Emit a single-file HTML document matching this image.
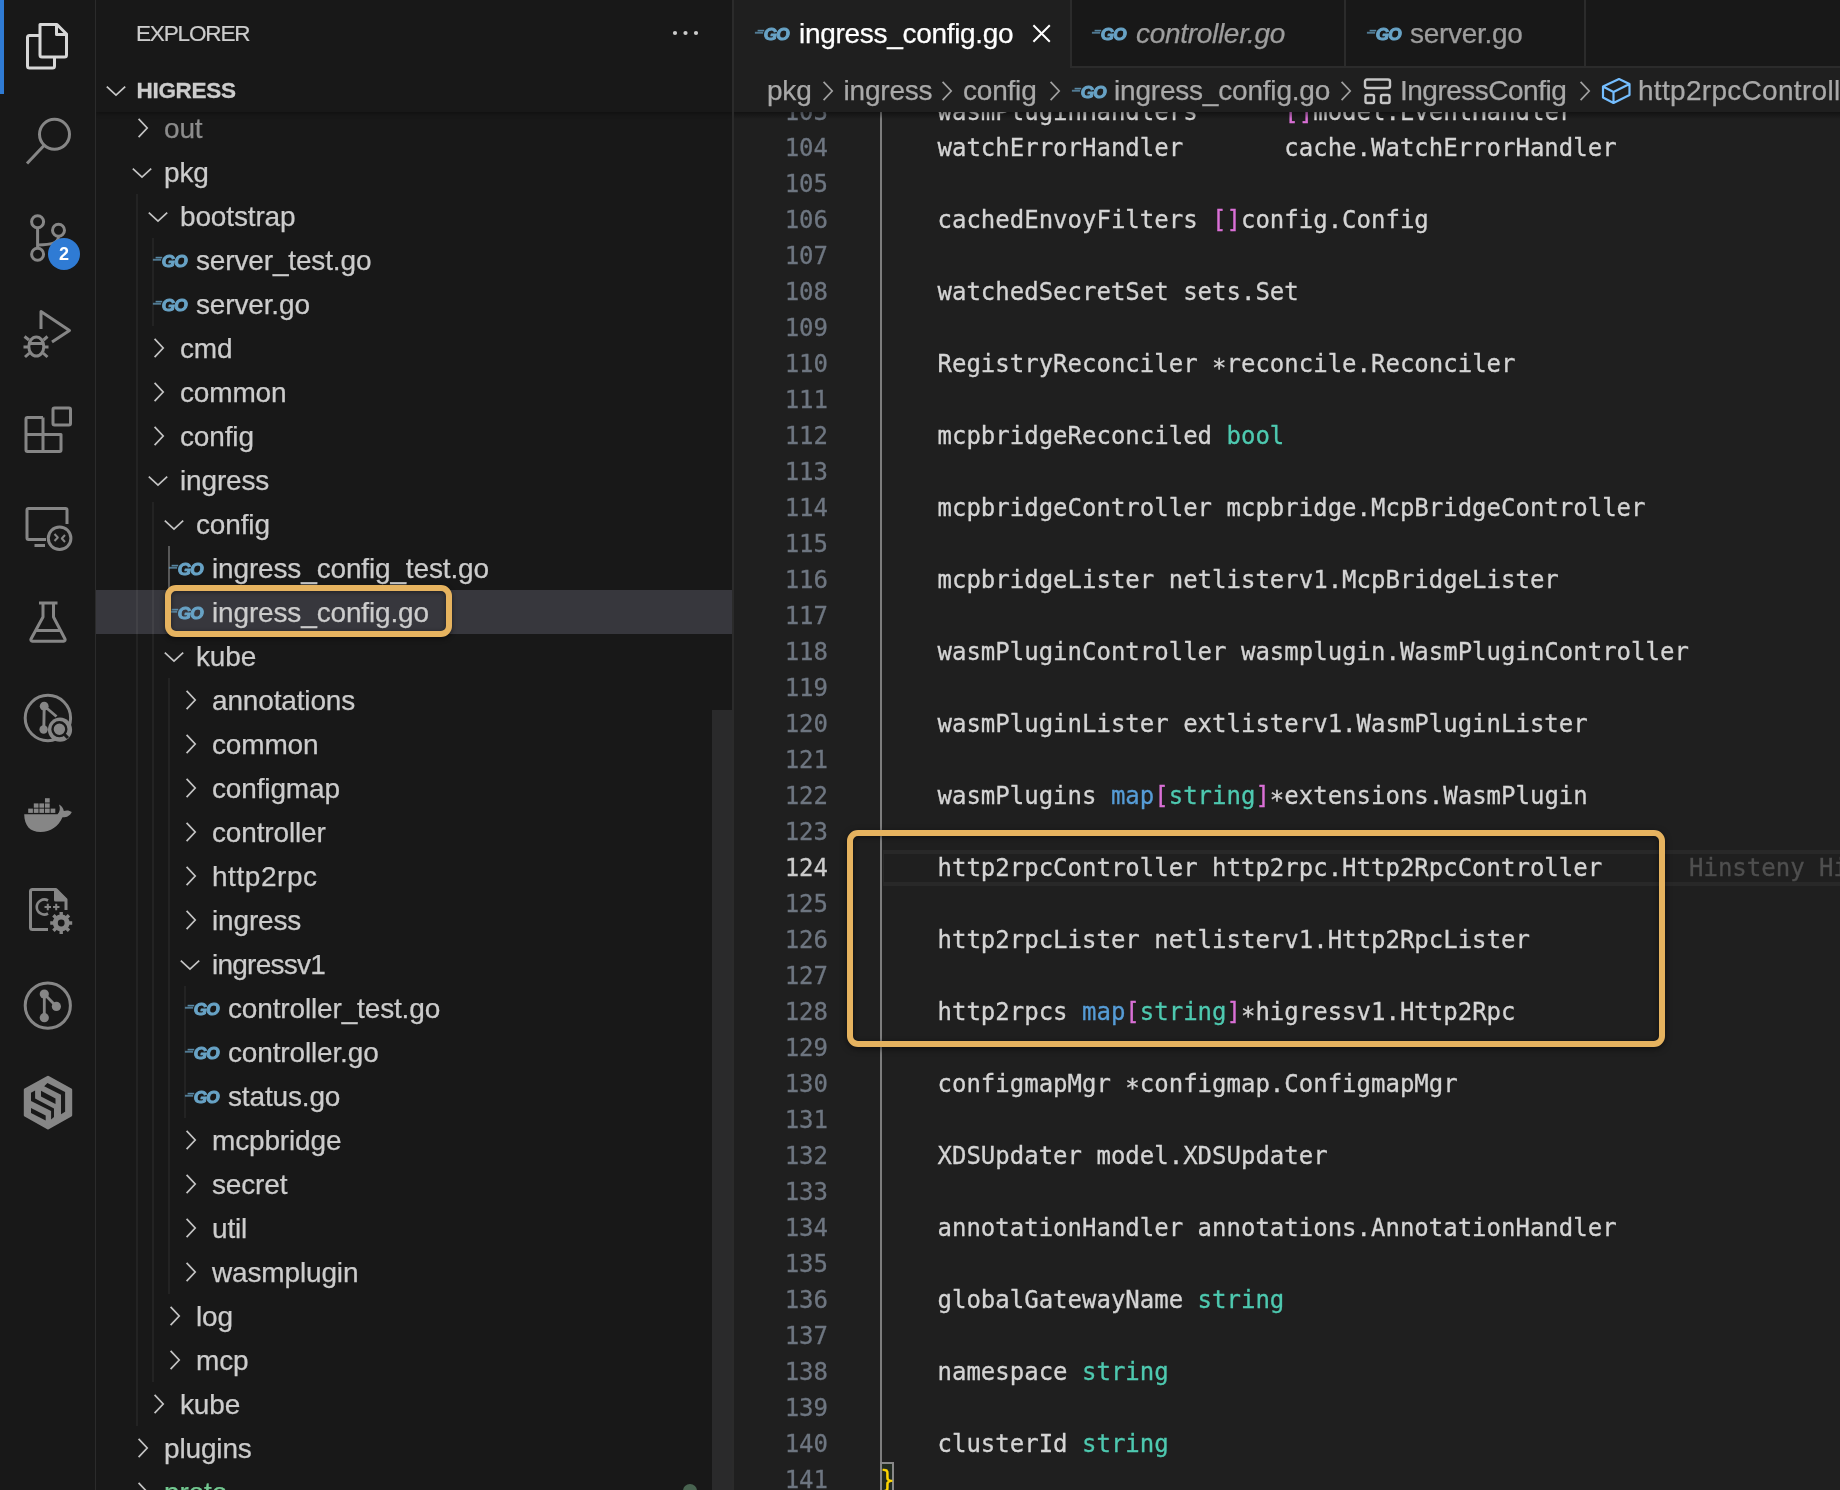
<!DOCTYPE html>
<html lang="en"><head><meta charset="utf-8"><title>ingress_config.go - higress</title>
<style>
html,body{margin:0;padding:0;background:#181818;}
body{width:1840px;height:1490px;position:relative;overflow:hidden;font-family:"Liberation Sans",sans-serif;color:#ccc;}
.abs{position:absolute;}
svg{display:block;overflow:visible}
.go{position:absolute;}
#act,#side,#ed{will-change:transform}
#act{position:absolute;left:0;top:0;width:95px;height:1490px;background:#181818;border-right:1px solid #2b2b2b;}
#side{position:absolute;left:96px;top:0;width:637px;height:1490px;background:#181818;overflow:hidden;}
#ed{position:absolute;left:734px;top:0;width:1106px;height:1490px;background:#1f1f1f;overflow:hidden;}
#edborder{position:absolute;left:732px;top:0;width:2px;height:1490px;background:#2b2b2b;}
.row{position:absolute;left:0;width:637px;height:44px;}
.lbl{position:absolute;top:0;-webkit-text-stroke:.25px;height:44px;line-height:46px;font-size:28px;letter-spacing:-.15px;color:#ccc;white-space:pre;}
.guide{position:absolute;width:2px;background:#2c2c2c;}
.ln{position:absolute;left:0;-webkit-text-stroke:.3px;width:94px;text-align:right;font-family:"DejaVu Sans Mono","Liberation Mono",monospace;font-size:24px;line-height:36px;height:36px;color:#6e7681;white-space:pre;}
.cl{position:absolute;left:147px;-webkit-text-stroke:.3px;font-family:"DejaVu Sans Mono","Liberation Mono",monospace;font-size:24px;line-height:36px;height:36px;color:#d4d4d4;white-space:pre;}
.as{position:relative;top:4px}.t{color:#4ec9b0}.k{color:#569cd6}.b2{color:#da70d6}.b1{color:#ffd700}
.tab{position:absolute;top:0;height:66px;border-right:2px solid #2b2b2b;box-sizing:border-box;}
.tabl{position:absolute;top:12px;-webkit-text-stroke:.25px;font-size:28px;line-height:44px;white-space:pre;letter-spacing:-.3px;}
.bc{position:absolute;top:69px;-webkit-text-stroke:.25px;font-size:28px;line-height:44px;color:#a9a9a9;white-space:pre;letter-spacing:-.2px;}
</style></head><body>

<div id="act">
<div class="abs" style="left:0;top:0;width:4px;height:94px;background:#2f7bd4"></div>
<svg class="abs" style="left:0;top:0" width="96" height="96" viewBox="0 0 96 96" fill="none" stroke="#d7d7d7" stroke-width="3" stroke-linejoin="round">
<path d="M40 24.5 H57 L66.5 34 V55 a2 2 0 0 1 -2 2 H42 a2 2 0 0 1 -2 -2 Z"/>
<path d="M56.5 25 V34.5 H66"/>
<path d="M39.5 35.5 H29.5 a2 2 0 0 0 -2 2 V66 a2 2 0 0 0 2 2 H52.5 a2 2 0 0 0 2 -2 V57.5"/>
</svg>
<svg class="abs" style="left:0;top:96px" width="96" height="96" viewBox="0 96 96 96" fill="none" stroke="#868686" stroke-width="3">
<circle cx="54.5" cy="134.3" r="15"/><path d="M44 145.5 L27 163.5"/></svg>
<svg class="abs" style="left:0;top:192px" width="96" height="96" viewBox="0 192 96 96" fill="none" stroke="#868686" stroke-width="3">
<circle cx="37.6" cy="221.8" r="6"/><circle cx="58.5" cy="230.3" r="6"/><circle cx="37.6" cy="254.2" r="6"/>
<path d="M37.6 228 V248"/><path d="M58.5 236.5 C58.5 244 50 244.5 38 245"/></svg>
<div class="abs" style="left:48px;top:238px;width:32px;height:32px;border-radius:16px;background:#2f7bd4;color:#fff;font-weight:bold;font-size:18px;line-height:32px;text-align:center">2</div>
<svg class="abs" style="left:0;top:288px" width="96" height="96" viewBox="0 288 96 96" fill="none" stroke="#868686" stroke-width="3" stroke-linejoin="round">
<path d="M41 329 V311.5 L69.5 330.5 L52 342"/>
<ellipse cx="36.3" cy="346.5" rx="7.5" ry="9.5"/>
<path d="M29 340 L24.5 336.5 M43.5 340 L47.5 336.5 M28.5 347 H23.5 M44 347 H48.5 M29.5 353 L25 357 M43 353 L47.5 357 M30 343.5 H42.5"/>
</svg>
<svg class="abs" style="left:0;top:384px" width="96" height="96" viewBox="0 384 96 96" fill="none" stroke="#868686" stroke-width="3" stroke-linejoin="round">
<path d="M43 417.5 H27.5 a1.5 1.5 0 0 0 -1.5 1.5 V450 a1.5 1.5 0 0 0 1.5 1.5 H59.5 a1.5 1.5 0 0 0 1.5 -1.5 V434.5 H26 M43 417.5 V451.5"/>
<rect x="53" y="408" width="17.5" height="17" rx="1.5"/>
</svg>
<svg class="abs" style="left:0;top:480px" width="96" height="96" viewBox="0 480 96 96" fill="none" stroke="#868686" stroke-width="3" stroke-linejoin="round">
<path d="M46 539.5 H28.5 a1.5 1.5 0 0 1 -1.5 -1.5 V510 a1.5 1.5 0 0 1 1.5 -1.5 H65.5 a1.5 1.5 0 0 1 1.5 1.5 V524"/>
<path d="M34.5 545.5 H45"/>
<circle cx="59.6" cy="538.2" r="11.3"/>
<path d="M54.5 534 L57.8 537.5 L54.5 541 M65 535 L61.8 538.5 L65 542" stroke-width="2"/>
</svg>
<svg class="abs" style="left:0;top:576px" width="96" height="96" viewBox="0 576 96 96" fill="none" stroke="#868686" stroke-width="3" stroke-linejoin="round">
<path d="M39 603 H57.5"/>
<path d="M43 603.5 V617 L31 639 a1.5 1.5 0 0 0 1.3 2.2 H63.7 a1.5 1.5 0 0 0 1.3 -2.2 L53.5 617 V603.5"/>
<path d="M35.5 630.5 H61"/>
</svg>
<svg class="abs" style="left:0;top:672px" width="96" height="96" viewBox="0 672 96 96" fill="none" stroke="#868686" stroke-width="3">
<circle cx="47.9" cy="718" r="22.7"/>
<circle cx="44.2" cy="706.2" r="4.4" fill="#868686" stroke="none"/><circle cx="43.6" cy="729.5" r="4.2" fill="#868686" stroke="none"/>
<path d="M44.2 706 L43.8 729.5 M44.2 706 L56.5 716.5" stroke-width="2.9"/>
<circle cx="60" cy="729.7" r="12.1" fill="#868686" stroke="none"/>
<circle cx="59.4" cy="729.2" r="6.9" stroke="#181818" stroke-width="2.4"/>
<path d="M64.4 734.4 L68 738" stroke="#181818" stroke-width="3"/>
</svg>
<svg class="abs" style="left:0;top:768px" width="96" height="96" viewBox="0 768 96 96" fill="#868686" stroke="none">
<rect x="28.2" y="808.6" width="4.7" height="4.3"/><rect x="33.8" y="808.6" width="4.7" height="4.3"/><rect x="39.4" y="808.6" width="4.7" height="4.3"/><rect x="45" y="808.6" width="4.7" height="4.3"/><rect x="50.6" y="808.6" width="4.7" height="4.3"/><rect x="33.8" y="803.4" width="4.7" height="4.3"/><rect x="39.4" y="803.4" width="4.7" height="4.3"/><rect x="45" y="803.4" width="4.7" height="4.3"/><rect x="45" y="798.2" width="4.7" height="4.3"/>
<path d="M24.2 814.2 H57.5 C60 812 60.5 808 59 804.5 C62 806 63.5 808.5 63.8 811 C66.5 810 69.5 810.3 71.8 812 C70 816 66.5 817.5 62.5 817.3 C58.5 826.5 50.5 832 40.5 832 C30 832 24.3 825.5 24.2 814.2 Z"/>
</svg>
<svg class="abs" style="left:0;top:864px" width="96" height="96" viewBox="0 864 96 96" fill="none" stroke="#868686" stroke-width="3" stroke-linejoin="round">
<path d="M48 929.5 H32.5 a2 2 0 0 1 -2 -2 V891.5 a2 2 0 0 1 2 -2 H56 L66 899.5 V910"/>
<path d="M55.5 890 V900 H65.5 Z" fill="#868686"/>
<path d="M48 900.5 A7.5 7.5 0 1 0 48 913.5" stroke-width="2.6"/>
<path d="M44.5 907 H51 M47.8 903.8 V910.2 M53 907 H59.5 M56.2 903.8 V910.2" stroke-width="2"/>
<circle cx="61.2" cy="923" r="6.3" stroke-width="4.2"/>
<path d="M61.2 912 V934 M50.2 923 H72.2 M53.4 915.2 L69 930.8 M69 915.2 L53.4 930.8" stroke-width="3.4"/>
<circle cx="61.2" cy="923" r="3.4" fill="#181818" stroke="none"/>
</svg>
<svg class="abs" style="left:0;top:960px" width="96" height="96" viewBox="0 960 96 96" fill="none" stroke="#868686" stroke-width="3">
<circle cx="47.8" cy="1005.6" r="22.6"/>
<circle cx="44.3" cy="994" r="4.6" fill="#868686" stroke="none"/><circle cx="44.3" cy="1017.7" r="4.6" fill="#868686" stroke="none"/><circle cx="56.4" cy="1006.4" r="4.6" fill="#868686" stroke="none"/>
<path d="M44.3 994 V1017.7 M44.3 994 L56.4 1006.4" stroke-width="2.8"/>
</svg>
<svg class="abs" style="left:0;top:1056px" width="96" height="96" viewBox="0 1056 96 96">
<path d="M48 1077.3 L70.7 1089.8 V1115.2 L48 1127.9 L25.3 1115.2 V1089.8 Z" fill="#868686" stroke="#868686" stroke-width="3" stroke-linejoin="round"/>
<g fill="#181818">
<path d="M47.4 1083.1 L65.1 1092 V1111.8 L61 1114.3 V1094.8 L44.2 1086.3 Z"/>
<path d="M41 1090.7 L55.5 1098.4 V1104.1 L41 1096.5 Z"/>
<path d="M31 1092.7 L35.1 1090.5 V1098.4 L54 1108.6 V1117.1 L51.1 1119.4 V1111.1 L31 1100.9 Z"/>
<path d="M31 1108 L45.7 1115.4 V1120.5 L31 1113.1 Z"/>
</g>
</svg>
</div>
<div id="side">
<div class="abs" style="left:0;top:590px;width:637px;height:44px;background:#37373d"></div>
<div class="guide" style="left:40px;top:194px;height:1232px;background:rgba(255,255,255,.05)"></div>
<div class="guide" style="left:56px;top:238px;height:88px;background:rgba(255,255,255,.05)"></div>
<div class="guide" style="left:56px;top:502px;height:880px;background:rgba(255,255,255,.05)"></div>
<div class="guide" style="left:72px;top:546px;height:88px;background:#585858"></div>
<div class="guide" style="left:72px;top:678px;height:616px;background:rgba(255,255,255,.05)"></div>
<div class="guide" style="left:88px;top:986px;height:132px;background:rgba(255,255,255,.05)"></div>
<div class="row" style="top:106px">
<svg class="abs" style="left:38.7px;top:10px" width="16" height="24" viewBox="0 0 16 24"><path d="M3.6 2.8 L12.2 12 L3.6 21.2" fill="none" stroke="#c4c4c4" stroke-width="1.7"/></svg>
<span class="lbl" style="left:68px;color:#8c8c8c">out</span>
</div>
<div class="row" style="top:150px">
<svg class="abs" style="left:34px;top:14.5px" width="24" height="16" viewBox="0 0 24 16"><path d="M2.8 3.6 L12 12.2 L21.2 3.6" fill="none" stroke="#c4c4c4" stroke-width="1.7"/></svg>
<span class="lbl" style="left:68px;color:#ccc">pkg</span>
</div>
<div class="row" style="top:194px">
<svg class="abs" style="left:50px;top:14.5px" width="24" height="16" viewBox="0 0 24 16"><path d="M2.8 3.6 L12 12.2 L21.2 3.6" fill="none" stroke="#c4c4c4" stroke-width="1.7"/></svg>
<span class="lbl" style="left:84px;color:#ccc">bootstrap</span>
</div>
<div class="row" style="top:238px">
<svg class="go" style="left:56.2px;top:13px;opacity:1.0" width="38" height="18" viewBox="0 0 38 18"><rect x="3.6" y="5.8" width="6.6" height="1.6" fill="#68a3c6" opacity=".8"/><rect x="0.9" y="7.8" width="8.2" height="1.9" fill="#68a3c6" opacity=".7"/><text x="9.7" y="15.6" font-family="Liberation Sans, sans-serif" font-weight="bold" font-style="italic" font-size="17.2" letter-spacing="-0.9" fill="#68a3c6" stroke="#68a3c6" stroke-width="1.05" stroke-linejoin="round">GO</text></svg>
<span class="lbl" style="left:100px;color:#ccc">server_test.go</span>
</div>
<div class="row" style="top:282px">
<svg class="go" style="left:56.2px;top:13px;opacity:1.0" width="38" height="18" viewBox="0 0 38 18"><rect x="3.6" y="5.8" width="6.6" height="1.6" fill="#68a3c6" opacity=".8"/><rect x="0.9" y="7.8" width="8.2" height="1.9" fill="#68a3c6" opacity=".7"/><text x="9.7" y="15.6" font-family="Liberation Sans, sans-serif" font-weight="bold" font-style="italic" font-size="17.2" letter-spacing="-0.9" fill="#68a3c6" stroke="#68a3c6" stroke-width="1.05" stroke-linejoin="round">GO</text></svg>
<span class="lbl" style="left:100px;color:#ccc">server.go</span>
</div>
<div class="row" style="top:326px">
<svg class="abs" style="left:54.7px;top:10px" width="16" height="24" viewBox="0 0 16 24"><path d="M3.6 2.8 L12.2 12 L3.6 21.2" fill="none" stroke="#c4c4c4" stroke-width="1.7"/></svg>
<span class="lbl" style="left:84px;color:#ccc">cmd</span>
</div>
<div class="row" style="top:370px">
<svg class="abs" style="left:54.7px;top:10px" width="16" height="24" viewBox="0 0 16 24"><path d="M3.6 2.8 L12.2 12 L3.6 21.2" fill="none" stroke="#c4c4c4" stroke-width="1.7"/></svg>
<span class="lbl" style="left:84px;color:#ccc">common</span>
</div>
<div class="row" style="top:414px">
<svg class="abs" style="left:54.7px;top:10px" width="16" height="24" viewBox="0 0 16 24"><path d="M3.6 2.8 L12.2 12 L3.6 21.2" fill="none" stroke="#c4c4c4" stroke-width="1.7"/></svg>
<span class="lbl" style="left:84px;color:#ccc">config</span>
</div>
<div class="row" style="top:458px">
<svg class="abs" style="left:50px;top:14.5px" width="24" height="16" viewBox="0 0 24 16"><path d="M2.8 3.6 L12 12.2 L21.2 3.6" fill="none" stroke="#c4c4c4" stroke-width="1.7"/></svg>
<span class="lbl" style="left:84px;color:#ccc">ingress</span>
</div>
<div class="row" style="top:502px">
<svg class="abs" style="left:66px;top:14.5px" width="24" height="16" viewBox="0 0 24 16"><path d="M2.8 3.6 L12 12.2 L21.2 3.6" fill="none" stroke="#c4c4c4" stroke-width="1.7"/></svg>
<span class="lbl" style="left:100px;color:#ccc">config</span>
</div>
<div class="row" style="top:546px">
<svg class="go" style="left:72.2px;top:13px;opacity:1.0" width="38" height="18" viewBox="0 0 38 18"><rect x="3.6" y="5.8" width="6.6" height="1.6" fill="#68a3c6" opacity=".8"/><rect x="0.9" y="7.8" width="8.2" height="1.9" fill="#68a3c6" opacity=".7"/><text x="9.7" y="15.6" font-family="Liberation Sans, sans-serif" font-weight="bold" font-style="italic" font-size="17.2" letter-spacing="-0.9" fill="#68a3c6" stroke="#68a3c6" stroke-width="1.05" stroke-linejoin="round">GO</text></svg>
<span class="lbl" style="left:116px;color:#ccc">ingress_config_test.go</span>
</div>
<div class="row" style="top:590px">
<svg class="go" style="left:72.2px;top:13px;opacity:1.0" width="38" height="18" viewBox="0 0 38 18"><rect x="3.6" y="5.8" width="6.6" height="1.6" fill="#68a3c6" opacity=".8"/><rect x="0.9" y="7.8" width="8.2" height="1.9" fill="#68a3c6" opacity=".7"/><text x="9.7" y="15.6" font-family="Liberation Sans, sans-serif" font-weight="bold" font-style="italic" font-size="17.2" letter-spacing="-0.9" fill="#68a3c6" stroke="#68a3c6" stroke-width="1.05" stroke-linejoin="round">GO</text></svg>
<span class="lbl" style="left:116px;color:#ccc">ingress_config.go</span>
</div>
<div class="row" style="top:634px">
<svg class="abs" style="left:66px;top:14.5px" width="24" height="16" viewBox="0 0 24 16"><path d="M2.8 3.6 L12 12.2 L21.2 3.6" fill="none" stroke="#c4c4c4" stroke-width="1.7"/></svg>
<span class="lbl" style="left:100px;color:#ccc">kube</span>
</div>
<div class="row" style="top:678px">
<svg class="abs" style="left:86.7px;top:10px" width="16" height="24" viewBox="0 0 16 24"><path d="M3.6 2.8 L12.2 12 L3.6 21.2" fill="none" stroke="#c4c4c4" stroke-width="1.7"/></svg>
<span class="lbl" style="left:116px;color:#ccc">annotations</span>
</div>
<div class="row" style="top:722px">
<svg class="abs" style="left:86.7px;top:10px" width="16" height="24" viewBox="0 0 16 24"><path d="M3.6 2.8 L12.2 12 L3.6 21.2" fill="none" stroke="#c4c4c4" stroke-width="1.7"/></svg>
<span class="lbl" style="left:116px;color:#ccc">common</span>
</div>
<div class="row" style="top:766px">
<svg class="abs" style="left:86.7px;top:10px" width="16" height="24" viewBox="0 0 16 24"><path d="M3.6 2.8 L12.2 12 L3.6 21.2" fill="none" stroke="#c4c4c4" stroke-width="1.7"/></svg>
<span class="lbl" style="left:116px;color:#ccc">configmap</span>
</div>
<div class="row" style="top:810px">
<svg class="abs" style="left:86.7px;top:10px" width="16" height="24" viewBox="0 0 16 24"><path d="M3.6 2.8 L12.2 12 L3.6 21.2" fill="none" stroke="#c4c4c4" stroke-width="1.7"/></svg>
<span class="lbl" style="left:116px;color:#ccc">controller</span>
</div>
<div class="row" style="top:854px">
<svg class="abs" style="left:86.7px;top:10px" width="16" height="24" viewBox="0 0 16 24"><path d="M3.6 2.8 L12.2 12 L3.6 21.2" fill="none" stroke="#c4c4c4" stroke-width="1.7"/></svg>
<span class="lbl" style="left:116px;color:#ccc;letter-spacing:.55px">http2rpc</span>
</div>
<div class="row" style="top:898px">
<svg class="abs" style="left:86.7px;top:10px" width="16" height="24" viewBox="0 0 16 24"><path d="M3.6 2.8 L12.2 12 L3.6 21.2" fill="none" stroke="#c4c4c4" stroke-width="1.7"/></svg>
<span class="lbl" style="left:116px;color:#ccc">ingress</span>
</div>
<div class="row" style="top:942px">
<svg class="abs" style="left:82px;top:14.5px" width="24" height="16" viewBox="0 0 24 16"><path d="M2.8 3.6 L12 12.2 L21.2 3.6" fill="none" stroke="#c4c4c4" stroke-width="1.7"/></svg>
<span class="lbl" style="left:116px;color:#ccc;letter-spacing:-.75px">ingressv1</span>
</div>
<div class="row" style="top:986px">
<svg class="go" style="left:88.2px;top:13px;opacity:1.0" width="38" height="18" viewBox="0 0 38 18"><rect x="3.6" y="5.8" width="6.6" height="1.6" fill="#68a3c6" opacity=".8"/><rect x="0.9" y="7.8" width="8.2" height="1.9" fill="#68a3c6" opacity=".7"/><text x="9.7" y="15.6" font-family="Liberation Sans, sans-serif" font-weight="bold" font-style="italic" font-size="17.2" letter-spacing="-0.9" fill="#68a3c6" stroke="#68a3c6" stroke-width="1.05" stroke-linejoin="round">GO</text></svg>
<span class="lbl" style="left:132px;color:#ccc">controller_test.go</span>
</div>
<div class="row" style="top:1030px">
<svg class="go" style="left:88.2px;top:13px;opacity:1.0" width="38" height="18" viewBox="0 0 38 18"><rect x="3.6" y="5.8" width="6.6" height="1.6" fill="#68a3c6" opacity=".8"/><rect x="0.9" y="7.8" width="8.2" height="1.9" fill="#68a3c6" opacity=".7"/><text x="9.7" y="15.6" font-family="Liberation Sans, sans-serif" font-weight="bold" font-style="italic" font-size="17.2" letter-spacing="-0.9" fill="#68a3c6" stroke="#68a3c6" stroke-width="1.05" stroke-linejoin="round">GO</text></svg>
<span class="lbl" style="left:132px;color:#ccc">controller.go</span>
</div>
<div class="row" style="top:1074px">
<svg class="go" style="left:88.2px;top:13px;opacity:1.0" width="38" height="18" viewBox="0 0 38 18"><rect x="3.6" y="5.8" width="6.6" height="1.6" fill="#68a3c6" opacity=".8"/><rect x="0.9" y="7.8" width="8.2" height="1.9" fill="#68a3c6" opacity=".7"/><text x="9.7" y="15.6" font-family="Liberation Sans, sans-serif" font-weight="bold" font-style="italic" font-size="17.2" letter-spacing="-0.9" fill="#68a3c6" stroke="#68a3c6" stroke-width="1.05" stroke-linejoin="round">GO</text></svg>
<span class="lbl" style="left:132px;color:#ccc">status.go</span>
</div>
<div class="row" style="top:1118px">
<svg class="abs" style="left:86.7px;top:10px" width="16" height="24" viewBox="0 0 16 24"><path d="M3.6 2.8 L12.2 12 L3.6 21.2" fill="none" stroke="#c4c4c4" stroke-width="1.7"/></svg>
<span class="lbl" style="left:116px;color:#ccc">mcpbridge</span>
</div>
<div class="row" style="top:1162px">
<svg class="abs" style="left:86.7px;top:10px" width="16" height="24" viewBox="0 0 16 24"><path d="M3.6 2.8 L12.2 12 L3.6 21.2" fill="none" stroke="#c4c4c4" stroke-width="1.7"/></svg>
<span class="lbl" style="left:116px;color:#ccc">secret</span>
</div>
<div class="row" style="top:1206px">
<svg class="abs" style="left:86.7px;top:10px" width="16" height="24" viewBox="0 0 16 24"><path d="M3.6 2.8 L12.2 12 L3.6 21.2" fill="none" stroke="#c4c4c4" stroke-width="1.7"/></svg>
<span class="lbl" style="left:116px;color:#ccc">util</span>
</div>
<div class="row" style="top:1250px">
<svg class="abs" style="left:86.7px;top:10px" width="16" height="24" viewBox="0 0 16 24"><path d="M3.6 2.8 L12.2 12 L3.6 21.2" fill="none" stroke="#c4c4c4" stroke-width="1.7"/></svg>
<span class="lbl" style="left:116px;color:#ccc">wasmplugin</span>
</div>
<div class="row" style="top:1294px">
<svg class="abs" style="left:70.7px;top:10px" width="16" height="24" viewBox="0 0 16 24"><path d="M3.6 2.8 L12.2 12 L3.6 21.2" fill="none" stroke="#c4c4c4" stroke-width="1.7"/></svg>
<span class="lbl" style="left:100px;color:#ccc">log</span>
</div>
<div class="row" style="top:1338px">
<svg class="abs" style="left:70.7px;top:10px" width="16" height="24" viewBox="0 0 16 24"><path d="M3.6 2.8 L12.2 12 L3.6 21.2" fill="none" stroke="#c4c4c4" stroke-width="1.7"/></svg>
<span class="lbl" style="left:100px;color:#ccc">mcp</span>
</div>
<div class="row" style="top:1382px">
<svg class="abs" style="left:54.7px;top:10px" width="16" height="24" viewBox="0 0 16 24"><path d="M3.6 2.8 L12.2 12 L3.6 21.2" fill="none" stroke="#c4c4c4" stroke-width="1.7"/></svg>
<span class="lbl" style="left:84px;color:#ccc">kube</span>
</div>
<div class="row" style="top:1426px">
<svg class="abs" style="left:38.7px;top:10px" width="16" height="24" viewBox="0 0 16 24"><path d="M3.6 2.8 L12.2 12 L3.6 21.2" fill="none" stroke="#c4c4c4" stroke-width="1.7"/></svg>
<span class="lbl" style="left:68px;color:#ccc">plugins</span>
</div>
<div class="row" style="top:1470px">
<svg class="abs" style="left:38.7px;top:10px" width="16" height="24" viewBox="0 0 16 24"><path d="M3.6 2.8 L12.2 12 L3.6 21.2" fill="none" stroke="#c4c4c4" stroke-width="1.7"/></svg>
<span class="lbl" style="left:68px;color:#73c991">proto</span>
</div>
<div class="abs" style="left:586.6px;top:1484.4px;width:14.6px;height:14.6px;border-radius:8px;background:#486350"></div>
<div class="abs" style="left:0;top:0;width:637px;height:112px;background:#181818;box-shadow:0 2px 4px rgba(0,0,0,.3)"></div>
<div class="abs" style="left:40px;top:16.5px;font-size:22.5px;line-height:34px;color:#ccc;letter-spacing:-1.15px;-webkit-text-stroke:.2px;white-space:pre">EXPLORER</div>
<svg class="abs" style="left:574px;top:29px" width="32" height="8" viewBox="0 0 32 8" fill="#ccc"><circle cx="5" cy="4" r="2.1"/><circle cx="15.5" cy="4" r="2.1"/><circle cx="26" cy="4" r="2.1"/></svg>
<svg class="abs" style="left:8px;top:83px" width="24" height="16" viewBox="0 0 24 16"><path d="M2.8 3.6 L12 12.2 L21.2 3.6" fill="none" stroke="#c8c8c8" stroke-width="1.7"/></svg>
<div class="abs" style="left:40.5px;top:73px;font-size:22.5px;line-height:36px;font-weight:bold;color:#ccc;letter-spacing:-.3px;-webkit-text-stroke:.3px;white-space:pre">HIGRESS</div>
<div class="abs" style="left:616px;top:710px;width:20px;height:780px;background:#2a2a2b"></div>
<div class="abs" style="left:69px;top:585px;width:287px;height:52px;box-sizing:border-box;border:6px solid #e6b35f;border-radius:11px;box-shadow:0 2px 5px rgba(0,0,0,.45), inset 0 1px 4px rgba(0,0,0,.45)"></div>
</div>
<div id="edborder"></div>
<div id="ed">
<div class="abs" style="left:149px;top:850px;width:960px;height:36px;box-sizing:border-box;border:4px solid #282828;border-right:0;border-left-width:1.5px"></div>
<div class="abs" style="left:146px;top:94px;width:2px;height:1368px;background:#7d7d7d"></div>
<div class="ln" style="top:94px;color:#6e7681">103</div>
<div class="cl" style="top:94px;left:203.5px">wasmPluginHandlers      <span class="b2">[]</span>model.EventHandler</div>
<div class="ln" style="top:130px;color:#6e7681">104</div>
<div class="cl" style="top:130px;left:203.5px">watchErrorHandler       cache.WatchErrorHandler</div>
<div class="ln" style="top:166px;color:#6e7681">105</div>
<div class="ln" style="top:202px;color:#6e7681">106</div>
<div class="cl" style="top:202px;left:203.5px">cachedEnvoyFilters <span class="b2">[]</span>config.Config</div>
<div class="ln" style="top:238px;color:#6e7681">107</div>
<div class="ln" style="top:274px;color:#6e7681">108</div>
<div class="cl" style="top:274px;left:203.5px">watchedSecretSet sets.Set</div>
<div class="ln" style="top:310px;color:#6e7681">109</div>
<div class="ln" style="top:346px;color:#6e7681">110</div>
<div class="cl" style="top:346px;left:203.5px">RegistryReconciler <span class="as">*</span>reconcile.Reconciler</div>
<div class="ln" style="top:382px;color:#6e7681">111</div>
<div class="ln" style="top:418px;color:#6e7681">112</div>
<div class="cl" style="top:418px;left:203.5px">mcpbridgeReconciled <span class="t">bool</span></div>
<div class="ln" style="top:454px;color:#6e7681">113</div>
<div class="ln" style="top:490px;color:#6e7681">114</div>
<div class="cl" style="top:490px;left:203.5px">mcpbridgeController mcpbridge.McpBridgeController</div>
<div class="ln" style="top:526px;color:#6e7681">115</div>
<div class="ln" style="top:562px;color:#6e7681">116</div>
<div class="cl" style="top:562px;left:203.5px">mcpbridgeLister netlisterv1.McpBridgeLister</div>
<div class="ln" style="top:598px;color:#6e7681">117</div>
<div class="ln" style="top:634px;color:#6e7681">118</div>
<div class="cl" style="top:634px;left:203.5px">wasmPluginController wasmplugin.WasmPluginController</div>
<div class="ln" style="top:670px;color:#6e7681">119</div>
<div class="ln" style="top:706px;color:#6e7681">120</div>
<div class="cl" style="top:706px;left:203.5px">wasmPluginLister extlisterv1.WasmPluginLister</div>
<div class="ln" style="top:742px;color:#6e7681">121</div>
<div class="ln" style="top:778px;color:#6e7681">122</div>
<div class="cl" style="top:778px;left:203.5px">wasmPlugins <span class="k">map</span><span class="b2">[</span><span class="t">string</span><span class="b2">]</span><span class="as">*</span>extensions.WasmPlugin</div>
<div class="ln" style="top:814px;color:#6e7681">123</div>
<div class="ln" style="top:850px;color:#ccc">124</div>
<div class="cl" style="top:850px;left:203.5px">http2rpcController http2rpc.Http2RpcController</div>
<div class="ln" style="top:886px;color:#6e7681">125</div>
<div class="ln" style="top:922px;color:#6e7681">126</div>
<div class="cl" style="top:922px;left:203.5px">http2rpcLister netlisterv1.Http2RpcLister</div>
<div class="ln" style="top:958px;color:#6e7681">127</div>
<div class="ln" style="top:994px;color:#6e7681">128</div>
<div class="cl" style="top:994px;left:203.5px">http2rpcs <span class="k">map</span><span class="b2">[</span><span class="t">string</span><span class="b2">]</span><span class="as">*</span>higressv1.Http2Rpc</div>
<div class="ln" style="top:1030px;color:#6e7681">129</div>
<div class="ln" style="top:1066px;color:#6e7681">130</div>
<div class="cl" style="top:1066px;left:203.5px">configmapMgr <span class="as">*</span>configmap.ConfigmapMgr</div>
<div class="ln" style="top:1102px;color:#6e7681">131</div>
<div class="ln" style="top:1138px;color:#6e7681">132</div>
<div class="cl" style="top:1138px;left:203.5px">XDSUpdater model.XDSUpdater</div>
<div class="ln" style="top:1174px;color:#6e7681">133</div>
<div class="ln" style="top:1210px;color:#6e7681">134</div>
<div class="cl" style="top:1210px;left:203.5px">annotationHandler annotations.AnnotationHandler</div>
<div class="ln" style="top:1246px;color:#6e7681">135</div>
<div class="ln" style="top:1282px;color:#6e7681">136</div>
<div class="cl" style="top:1282px;left:203.5px">globalGatewayName <span class="t">string</span></div>
<div class="ln" style="top:1318px;color:#6e7681">137</div>
<div class="ln" style="top:1354px;color:#6e7681">138</div>
<div class="cl" style="top:1354px;left:203.5px">namespace <span class="t">string</span></div>
<div class="ln" style="top:1390px;color:#6e7681">139</div>
<div class="ln" style="top:1426px;color:#6e7681">140</div>
<div class="cl" style="top:1426px;left:203.5px">clusterId <span class="t">string</span></div>
<div class="ln" style="top:1462px;color:#6e7681">141</div>
<div class="abs" style="left:146px;top:1462px;width:14.4px;height:36px;box-sizing:border-box;border:2px solid #888;background:#212a20"></div>
<div class="cl" style="top:1462px;left:146.29999999999995px"><span class="b1">}</span></div>
<div class="cl" style="top:850px;left:955px;color:#4f4f4f">Hinsteny Hi</div>
<div class="abs" style="left:113px;top:830px;width:818px;height:217px;box-sizing:border-box;border:6.5px solid #e6b35f;border-radius:11px;box-shadow:0 2px 6px rgba(0,0,0,.5), inset 0 1px 5px rgba(0,0,0,.5)"></div>
<div class="abs" style="left:0;top:0;width:1106px;height:66px;background:#181818;border-bottom:2px solid #2b2b2b"></div>
<div class="abs" style="left:0;top:68px;width:1106px;height:44px;background:#1f1f1f"></div><div class="abs" style="left:0;top:112px;width:1106px;height:7px;background:linear-gradient(rgba(0,0,0,.42),rgba(0,0,0,0))"></div>
<div class="tab" style="left:0;width:338px;background:#1f1f1f;height:68px"></div>
<div class="tab" style="left:338px;width:274px"></div>
<div class="tab" style="left:612px;width:240px"></div>
<svg class="go" style="left:20px;top:24px;opacity:1.0" width="38" height="18" viewBox="0 0 38 18"><rect x="3.6" y="5.8" width="6.6" height="1.6" fill="#68a3c6" opacity=".8"/><rect x="0.9" y="7.8" width="8.2" height="1.9" fill="#68a3c6" opacity=".7"/><text x="9.7" y="15.6" font-family="Liberation Sans, sans-serif" font-weight="bold" font-style="italic" font-size="17.2" letter-spacing="-0.9" fill="#68a3c6" stroke="#68a3c6" stroke-width="1.05" stroke-linejoin="round">GO</text></svg>
<div class="tabl" style="left:65px;color:#fff">ingress_config.go</div>
<svg class="abs" style="left:298px;top:23.5px" width="20" height="20" viewBox="0 0 20 20"><path d="M1.4 1.2 L17.8 17.8 M17.8 1.2 L1.4 17.8" stroke="#fff" stroke-width="2" fill="none"/></svg>
<svg class="go" style="left:357px;top:24px;opacity:1.0" width="38" height="18" viewBox="0 0 38 18"><rect x="3.6" y="5.8" width="6.6" height="1.6" fill="#68a3c6" opacity=".8"/><rect x="0.9" y="7.8" width="8.2" height="1.9" fill="#68a3c6" opacity=".7"/><text x="9.7" y="15.6" font-family="Liberation Sans, sans-serif" font-weight="bold" font-style="italic" font-size="17.2" letter-spacing="-0.9" fill="#68a3c6" stroke="#68a3c6" stroke-width="1.05" stroke-linejoin="round">GO</text></svg>
<div class="tabl" style="left:402px;color:#9d9d9d;font-style:italic">controller.go</div>
<svg class="go" style="left:632px;top:24px;opacity:1.0" width="38" height="18" viewBox="0 0 38 18"><rect x="3.6" y="5.8" width="6.6" height="1.6" fill="#68a3c6" opacity=".8"/><rect x="0.9" y="7.8" width="8.2" height="1.9" fill="#68a3c6" opacity=".7"/><text x="9.7" y="15.6" font-family="Liberation Sans, sans-serif" font-weight="bold" font-style="italic" font-size="17.2" letter-spacing="-0.9" fill="#68a3c6" stroke="#68a3c6" stroke-width="1.05" stroke-linejoin="round">GO</text></svg>
<div class="tabl" style="left:676px;color:#9d9d9d">server.go</div>
<div class="bc" style="left:33px">pkg</div>
<svg class="abs" style="left:86px;top:79px" width="16" height="24" viewBox="0 0 16 24"><path d="M3.6 2.8 L12.2 12 L3.6 21.2" fill="none" stroke="#a0a0a0" stroke-width="1.7"/></svg>
<div class="bc" style="left:109.5px">ingress</div>
<svg class="abs" style="left:205px;top:79px" width="16" height="24" viewBox="0 0 16 24"><path d="M3.6 2.8 L12.2 12 L3.6 21.2" fill="none" stroke="#a0a0a0" stroke-width="1.7"/></svg>
<div class="bc" style="left:229px">config</div>
<svg class="abs" style="left:313px;top:79px" width="16" height="24" viewBox="0 0 16 24"><path d="M3.6 2.8 L12.2 12 L3.6 21.2" fill="none" stroke="#a0a0a0" stroke-width="1.7"/></svg>
<svg class="go" style="left:337px;top:82px;opacity:1.0" width="38" height="18" viewBox="0 0 38 18"><rect x="3.6" y="5.8" width="6.6" height="1.6" fill="#68a3c6" opacity=".8"/><rect x="0.9" y="7.8" width="8.2" height="1.9" fill="#68a3c6" opacity=".7"/><text x="9.7" y="15.6" font-family="Liberation Sans, sans-serif" font-weight="bold" font-style="italic" font-size="17.2" letter-spacing="-0.9" fill="#68a3c6" stroke="#68a3c6" stroke-width="1.05" stroke-linejoin="round">GO</text></svg>
<div class="bc" style="left:380px">ingress_config.go</div>
<svg class="abs" style="left:604px;top:79px" width="16" height="24" viewBox="0 0 16 24"><path d="M3.6 2.8 L12.2 12 L3.6 21.2" fill="none" stroke="#a0a0a0" stroke-width="1.7"/></svg>
<svg class="abs" style="left:628px;top:76px" width="32" height="32" viewBox="0 0 32 32" fill="none" stroke="#c5c5c5" stroke-width="2.4"><rect x="3" y="3.5" width="25" height="8.5" rx="2"/><rect x="3.5" y="19" width="8.5" height="8" rx="1.5"/><rect x="19" y="19" width="8.5" height="8" rx="1.5"/></svg>
<div class="bc" style="left:666px;letter-spacing:-.5px">IngressConfig</div>
<svg class="abs" style="left:843px;top:79px" width="16" height="24" viewBox="0 0 16 24"><path d="M3.6 2.8 L12.2 12 L3.6 21.2" fill="none" stroke="#a0a0a0" stroke-width="1.7"/></svg>
<svg class="abs" style="left:866px;top:75px" width="32" height="32" viewBox="0 0 32 32" fill="none" stroke="#75beff" stroke-width="2.2" stroke-linejoin="round"><path d="M3 11.5 L19 4 L29.5 9 V20 L13.5 28 L3 22.5 Z M3 11.5 L13.5 17 L29.5 9 M13.5 17 V28"/></svg>
<div class="bc" style="left:904px;letter-spacing:.3px">http2rpcController</div>
</div>
</body></html>
